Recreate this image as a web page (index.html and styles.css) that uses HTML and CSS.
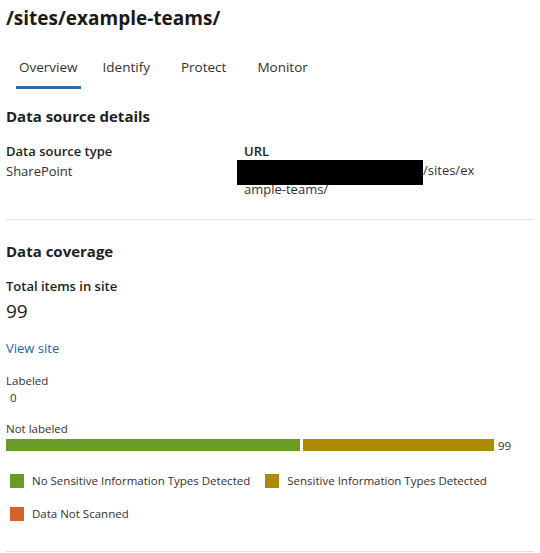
FILE: index.html
```html
<!DOCTYPE html>
<html lang="en">
<head>
<meta charset="utf-8">
<title>/sites/example-teams/</title>
<link rel="stylesheet" href="styles.css">
</head>
<body>
<div class="page">
  <h1 class="title">/sites/example-teams/</h1>

  <nav class="tabs">
    <div class="tab active">Overview</div>
    <div class="tab">Identify</div>
    <div class="tab">Protect</div>
    <div class="tab">Monitor</div>
  </nav>

  <section class="section">
    <h2 class="section-title">Data source details</h2>
    <div class="details">
      <div class="field">
        <div class="field-label">Data source type</div>
        <div class="field-value">SharePoint</div>
      </div>
      <div class="field">
        <div class="field-label">URL</div>
        <div class="field-value url"><span class="redacted"></span>/sites/ex<br>ample-teams/</div>
      </div>
    </div>
  </section>

  <section class="section coverage">
    <h2 class="section-title">Data coverage</h2>
    <div class="total-label">Total items in site</div>
    <div class="total-value">99</div>
    <a class="link" href="#">View site</a>

    <div class="small-label labeled">Labeled</div>
    <div class="small-value">0</div>

    <div class="small-label notlabeled">Not labeled</div>
    <div class="bar-row">
      <div class="bar">
        <div class="seg seg-green" style="width:294px"></div>
        <div class="seg seg-gold" style="width:191px"></div>
      </div>
      <span class="bar-count">99</span>
    </div>

    <div class="legend">
      <div class="legend-item"><span class="swatch swatch-green"></span>No Sensitive Information Types Detected</div>
      <div class="legend-item"><span class="swatch swatch-gold"></span>Sensitive Information Types Detected</div>
      <div class="legend-item"><span class="swatch swatch-orange"></span>Data Not Scanned</div>
    </div>
  </section>
</div>
</body>
</html>
```

FILE: styles.css
```css
* { box-sizing: border-box; }

html, body {
  margin: 0;
  padding: 0;
  background: #ffffff;
}

body {
  font-family: "Open Sans", "Noto Sans", sans-serif;
  color: #323130;
  font-size: 13px;
}

.page {
  padding: 0 6px;
}

.title {
  margin: 0;
  padding-top: 4px;
  font-size: 19px;
  line-height: 28px;
  font-weight: 700;
  color: #1b1a19;
}

.tabs {
  display: flex;
  margin-top: 13px;
  padding-left: 10px;
  gap: 25px;
}

.tab {
  font-size: 13.5px;
  line-height: 20px;
  padding: 12px 3px 9px;
  border-bottom: 3px solid transparent;
  color: #323130;
}

.tab.active {
  margin-right: -6px;
  border-bottom-color: #2f6aa9;
}

.section-title {
  margin: 17px 0 0;
  font-size: 15px;
  line-height: 20px;
  font-weight: 700;
  color: #201f1e;
}

.details {
  display: grid;
  grid-template-columns: 238px 240px;
  margin-top: 15px;
  padding-bottom: 20px;
  border-bottom: 1px solid #e1dfdd;
}

.field-label {
  font-weight: 600;
  line-height: 20px;
  font-size: 13px;
  color: #201f1e;
}

.field-value {
  line-height: 20px;
}

.url {
  line-height: 19px;
}

.redacted {
  display: inline-block;
  position: relative;
  width: 179px;
  height: 14px;
  vertical-align: middle;
}

.redacted::before {
  content: "";
  position: absolute;
  left: -7px;
  top: -5px;
  width: 186px;
  height: 25px;
  background: #000000;
}

.coverage .section-title {
  margin-top: 21px;
}

.total-label {
  margin-top: 15px;
  font-weight: 600;
  line-height: 20px;
  color: #201f1e;
}

.total-value {
  margin-top: 2px;
  font-size: 19px;
  line-height: 26px;
  font-weight: 400;
  color: #201f1e;
}

.link {
  display: block;
  margin-top: 14px;
  line-height: 20px;
  color: #2264b0;
  text-decoration: none;
}

.small-label {
  font-size: 11.5px;
  line-height: 16px;
}

.labeled {
  margin-top: 15px;
}

.small-value {
  margin-top: 1px;
  padding-left: 4px;
  font-size: 11.5px;
  line-height: 16px;
}

.notlabeled {
  margin-top: 15px;
}

.bar-row {
  display: flex;
  align-items: flex-start;
  margin-top: 2px;
  gap: 4px;
  height: 12px;
}

.bar {
  display: flex;
  gap: 3px;
  height: 12px;
}

.seg {
  height: 12px;
}

.seg-green { background: #6a9b24; }
.seg-gold { background: #ad8b00; }

.bar-count {
  font-size: 11.5px;
  line-height: 12px;
  margin-top: 1px;
}

.legend {
  display: flex;
  flex-wrap: wrap;
  column-gap: 15px;
  row-gap: 13px;
  margin-top: 20px;
  padding-left: 4px;
  padding-bottom: 27px;
  border-bottom: 1px solid #e1dfdd;
}

.legend-item {
  display: flex;
  align-items: center;
  gap: 8px;
  font-size: 11.5px;
  line-height: 20px;
}

.swatch {
  width: 14px;
  height: 14px;
  flex: none;
}

.swatch-green { background: #6a9b24; }
.swatch-gold { background: #ad8b00; }
.swatch-orange { background: #d4632a; }
```
